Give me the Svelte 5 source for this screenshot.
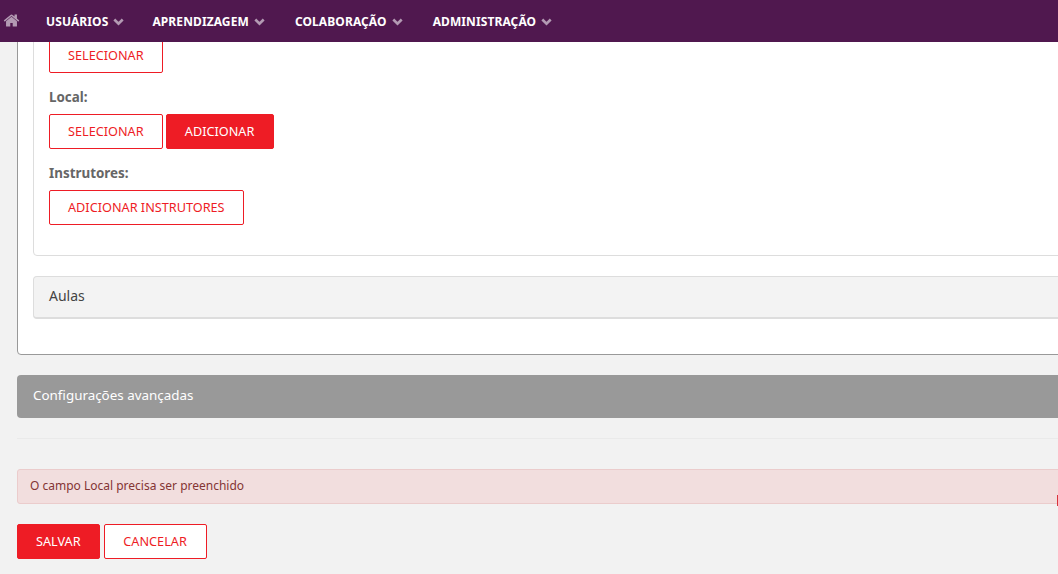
<script>
	const menu = ['USUÁRIOS', 'APRENDIZAGEM', 'COLABORAÇÃO', 'ADMINISTRAÇÃO'];
</script>

<nav class="topbar">
	<a class="home" href="#home" aria-label="Início">
		<svg viewBox="0 0 1792 1792" width="17" height="17">
			<path d="M1472 992v480q0 26-19 45t-45 19h-384v-384h-256v384h-384q-26 0-45-19t-19-45v-480q0-1 .5-3t.5-3l575-474 575 474q1 2 1 6zm223-69l-62 74q-8 9-21 11h-3q-13 0-21-7l-692-577-692 577q-12 8-24 7-13-2-21-11l-62-74q-8-10-7-23.5t11-21.5l719-599q32-26 76-26t76 26l244 204v-195q0-14 9-23t23-9h192q14 0 23 9t9 23v408l219 182q10 8 11 21.5t-7 23.5z" />
		</svg>
	</a>
	{#each menu as item}
		<a class="menu-item" href="#menu">
			{item}
			<svg class="caret" viewBox="0 0 11 8" width="11" height="8">
				<path d="M1.3 1.5 5.5 5.7 9.7 1.5" />
			</svg>
		</a>
	{/each}
</nav>

<main class="page">
	<section class="outer-panel">
		<div class="inner-panel">
			<div class="field first">
				<button class="btn outline">SELECIONAR</button>
			</div>
			<div class="field">
				<span class="field-label">Local:</span>
				<div class="btn-row">
					<button class="btn outline">SELECIONAR</button>
					<button class="btn solid add">ADICIONAR</button>
				</div>
			</div>
			<div class="field">
				<span class="field-label">Instrutores:</span>
				<button class="btn outline">ADICIONAR INSTRUTORES</button>
			</div>
		</div>
		<div class="collapsed">Aulas</div>
	</section>

	<div class="advanced">Configurações avançadas</div>
	<hr class="divider" />
	<div class="alert">O campo Local precisa ser preenchido</div>
	<div class="btn-row actions">
		<button class="btn solid">SALVAR</button>
		<button class="btn outline cancel">CANCELAR</button>
	</div>
</main>

<span class="edge-mark"></span>

<style>
	:global(body) {
		margin: 0;
		height: 574px;
		overflow: hidden;
		background: #f2f2f2;
		font-family: 'Noto Sans', 'Open Sans', sans-serif;
	}

	.topbar {
		position: fixed;
		top: 0;
		left: 0;
		right: 0;
		height: 42px;
		z-index: 10;
		display: flex;
		align-items: center;
		background: #50184f;
	}

	.home {
		display: flex;
		width: 46px;
		padding-left: 3px;
		margin-top: -2px;
		box-sizing: border-box;
	}

	.home svg {
		fill: #b39ab3;
	}

	.menu-item {
		display: flex;
		align-items: center;
		gap: 5px;
		margin-right: 30px;
		color: #fff;
		font-size: 12px;
		font-weight: 700;
		letter-spacing: 0.1px;
		text-decoration: none;
	}

	.menu-item:nth-child(2) {
		margin-right: 28px;
	}

	.caret {
		fill: none;
		stroke: #b39ab3;
		stroke-width: 2.6;
		margin-top: 2px;
	}

	.page {
		width: 1100px;
		padding: 0 0 0 17px;
		margin-top: -24px;
	}

	.outer-panel {
		background: #fff;
		border: 1px solid #999;
		border-radius: 4px;
		padding: 0 15px 35px;
	}

	.inner-panel {
		border: 1px solid #ddd;
		border-radius: 4px;
		padding: 60px 15px 30px;
		margin-bottom: 20px;
	}

	.field {
		display: flex;
		flex-direction: column;
		align-items: flex-start;
		margin-bottom: 15px;
	}

	.field:last-child {
		margin-bottom: 0;
	}

	.field-label {
		font-size: 13.4px;
		line-height: 19px;
		font-weight: 700;
		color: #666;
		margin-bottom: 7px;
	}

	.btn-row {
		display: flex;
		gap: 3px;
	}

	.btn {
		height: 35px;
		padding: 0 18px 2px;
		border: 1px solid #ee1c25;
		border-radius: 2px;
		font-family: inherit;
		font-size: 12.7px;
		box-sizing: border-box;
	}

	.outline {
		background: #fff;
		color: #ee1c25;
	}

	.solid {
		background: #ee1c25;
		color: #fff;
	}

	.add {
		min-width: 108px;
	}

	.cancel {
		min-width: 103px;
	}

	.collapsed {
		height: 43px;
		box-sizing: border-box;
		padding: 0 0 3px 15px;
		display: flex;
		align-items: center;
		background: #f3f3f3;
		border: 1px solid #ddd;
		border-bottom-width: 2px;
		border-radius: 4px;
		font-size: 14px;
		color: #444;
	}

	.advanced {
		margin-top: 20px;
		height: 43px;
		box-sizing: border-box;
		padding: 0 0 3px 16px;
		display: flex;
		align-items: center;
		background: #999;
		border-radius: 4px;
		color: #fff;
		font-size: 13.4px;
	}

	.divider {
		margin: 20px 0 30px;
		border: 0;
		border-top: 1px solid #eaeaea;
	}

	.alert {
		height: 35px;
		box-sizing: border-box;
		padding: 0 0 3px 12px;
		display: flex;
		align-items: center;
		background: #f2dede;
		border: 1px solid #ebcccc;
		border-radius: 3px;
		font-size: 12px;
		color: #843534;
	}

	.actions {
		margin-top: 20px;
		gap: 4px;
	}

	.edge-mark {
		position: fixed;
		right: 0;
		top: 495px;
		width: 1px;
		height: 11px;
		background: #d8343c;
	}
</style>
